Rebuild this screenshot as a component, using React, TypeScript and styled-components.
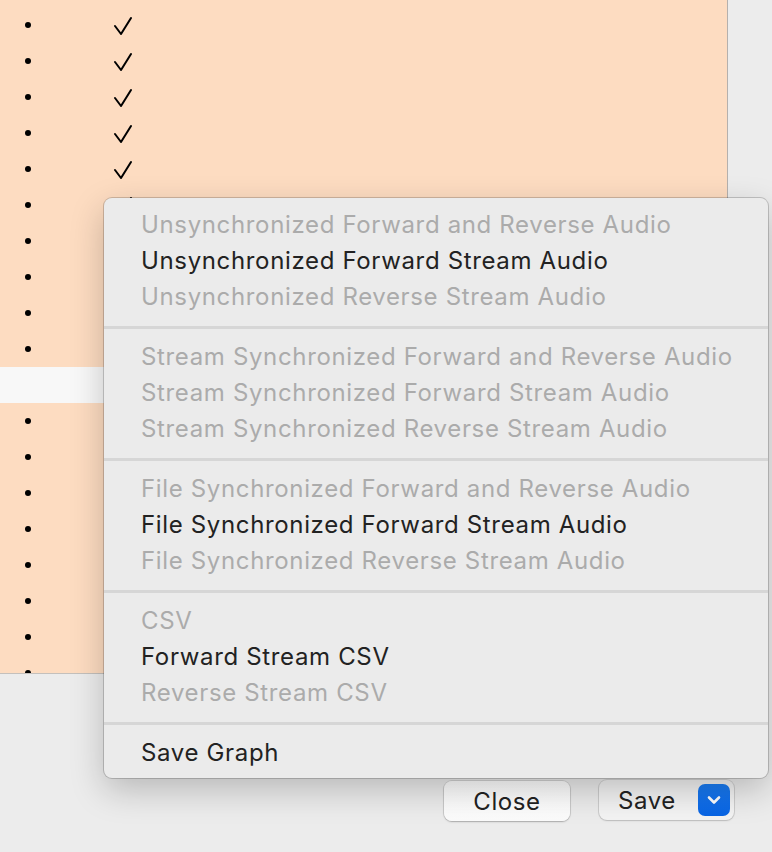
import React from "react";
import styled, { createGlobalStyle } from "styled-components";

const GlobalStyle = createGlobalStyle`
  html, body {
    margin: 0;
    padding: 0;
    background: #ececec;
  }
  body {
    font-family: Inter, "Noto Sans", "Liberation Sans", sans-serif;
    -webkit-font-smoothing: antialiased;
  }
`;

const Window = styled.div`
  position: relative;
  width: 772px;
  height: 852px;
  overflow: hidden;
  background: #ececec;
`;

const Table = styled.div`
  width: 728px;
  height: 674px;
  box-sizing: border-box;
  padding-top: 7px;
  background: #fddcc1;
  border-right: 1px solid #b4b0ad;
  border-bottom: 1px solid #c4c0bc;
  overflow: hidden;
`;

const Row = styled.div<{ $blank?: boolean }>`
  display: grid;
  grid-template-columns: 56px 100px 1fr;
  align-items: center;
  height: 36px;
  background: ${(p) => (p.$blank ? "#f8f8f8" : "transparent")};
`;

const Bullet = styled.span`
  justify-self: center;
  width: 6px;
  height: 6px;
  border-radius: 50%;
  background: #000;
`;

const Check = styled.svg`
  justify-self: start;
  margin-left: 57px;
  width: 20px;
  height: 20px;
`;

const Footer = styled.div`
  display: flex;
  justify-content: flex-end;
  align-items: center;
  gap: 29px;
  padding: 105px 38px 0 0;
`;

const Button = styled.div`
  display: flex;
  align-items: center;
  justify-content: center;
  box-sizing: border-box;
  height: 40px;
  border-radius: 8px;
  font-size: 24px;
  letter-spacing: 0.6px;
  color: #222;
`;

const CloseButton = styled(Button)`
  width: 126px;
  background: linear-gradient(#ffffff, #fbfbfb);
  box-shadow: 0 0 0 1px rgba(0, 0, 0, 0.1), 0 1px 2px rgba(0, 0, 0, 0.2);
  margin-top: 2px;
`;

const SaveButton = styled(Button)`
  width: 135px;
  justify-content: space-between;
  padding: 0 4px 0 19px;
  background: #f3f3f3;
  box-shadow: 0 0 0 1px rgba(0, 0, 0, 0.1), 0 1px 2px rgba(0, 0, 0, 0.12);
`;

const Arrow = styled.span`
  display: flex;
  align-items: center;
  justify-content: center;
  width: 32px;
  height: 32px;
  border-radius: 7px;
  background: linear-gradient(#1a7cf3, #0864e4);
`;

const Menu = styled.div`
  position: absolute;
  left: 104px;
  top: 198px;
  width: 664px;
  box-sizing: border-box;
  padding: 9px 0 7px;
  border-radius: 8px;
  background: #ebebeb;
  box-shadow: 0 0 0 1px rgba(0, 0, 0, 0.18), 0 12px 34px rgba(0, 0, 0, 0.22);
`;

const Item = styled.div<{ $disabled?: boolean }>`
  height: 36px;
  line-height: 36px;
  padding-left: 37px;
  font-size: 24px;
  letter-spacing: 0.65px;
  white-space: nowrap;
  color: ${(p) => (p.$disabled ? "#ababab" : "#222222")};
`;

const Separator = styled.div`
  height: 24px;
  display: flex;
  align-items: center;

  &::after {
    content: "";
    flex: 1;
    height: 3px;
    background: #d6d6d6;
  }
`;

type MenuEntry = { label: string; enabled?: boolean } | "sep";

const entries: MenuEntry[] = [
  { label: "Unsynchronized Forward and Reverse Audio" },
  { label: "Unsynchronized Forward Stream Audio", enabled: true },
  { label: "Unsynchronized Reverse Stream Audio" },
  "sep",
  { label: "Stream Synchronized Forward and Reverse Audio" },
  { label: "Stream Synchronized Forward Stream Audio" },
  { label: "Stream Synchronized Reverse Stream Audio" },
  "sep",
  { label: "File Synchronized Forward and Reverse Audio" },
  { label: "File Synchronized Forward Stream Audio", enabled: true },
  { label: "File Synchronized Reverse Stream Audio" },
  "sep",
  { label: "CSV" },
  { label: "Forward Stream CSV", enabled: true },
  { label: "Reverse Stream CSV" },
  "sep",
  { label: "Save Graph", enabled: true },
];

const BLANK_ROW = 10;
const CHECKED = 6;

export default function App() {
  const rows = Array.from({ length: 19 }, (_, i) => i);
  return (
    <>
      <GlobalStyle />
      <Window>
        <Table>
          {rows.map((i) =>
            i === BLANK_ROW ? (
              <Row key={i} $blank />
            ) : (
              <Row key={i}>
                <Bullet />
                {i < CHECKED ? (
                  <Check viewBox="0 0 20 20">
                    <polyline
                      points="2,11 8,19 18,3"
                      fill="none"
                      stroke="#000"
                      strokeWidth="2"
                      strokeLinecap="round"
                      strokeLinejoin="round"
                    />
                  </Check>
                ) : (
                  <span />
                )}
              </Row>
            )
          )}
        </Table>
        <Footer>
          <CloseButton>Close</CloseButton>
          <SaveButton>
            Save
            <Arrow>
              <svg width="14" height="10" viewBox="0 0 14 10">
                <polyline
                  points="2,2.5 7,7.5 12,2.5"
                  fill="none"
                  stroke="#fff"
                  strokeWidth="2.6"
                  strokeLinecap="round"
                  strokeLinejoin="round"
                />
              </svg>
            </Arrow>
          </SaveButton>
        </Footer>
        <Menu>
          {entries.map((e, i) =>
            e === "sep" ? (
              <Separator key={i} />
            ) : (
              <Item key={i} $disabled={!e.enabled}>
                {e.label}
              </Item>
            )
          )}
        </Menu>
      </Window>
    </>
  );
}
